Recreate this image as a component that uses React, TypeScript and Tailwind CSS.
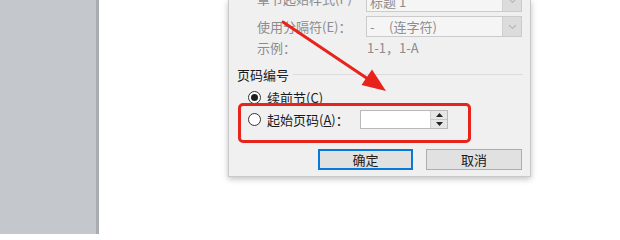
import React from "react";

const FONT = { fontFamily: '"Noto Sans CJK SC", "Noto Sans", sans-serif' };

function Chevron() {
  return (
    <svg width="9" height="6" viewBox="0 0 9 6" fill="none">
      <path d="M1 1l3.5 3.5L8 1" stroke="#b8b8b8" strokeWidth="1.1" />
    </svg>
  );
}

function Combo({ value, h }: { value: string; h: string }) {
  return (
    <div className={`flex w-[156px] ${h} border border-[#cbcbcb] bg-[#f5f5f5]`}>
      <div className="flex-1 flex items-center pl-[3px] text-[13px] text-[#8c8c8c] leading-none whitespace-pre">{value}</div>
      <div className="w-[19px] flex items-center justify-center bg-[#dcdcdc] border-l border-[#cfcfcf]">
        <Chevron />
      </div>
    </div>
  );
}

function Radio({ checked }: { checked?: boolean }) {
  return (
    <span className="w-[13px] h-[13px] rounded-full border border-[#333] bg-white flex items-center justify-center shrink-0">
      {checked && <span className="w-[7px] h-[7px] rounded-full bg-[#1f1f1f]" />}
    </span>
  );
}

function Spinner() {
  return (
    <div className="flex w-[88px] h-[19px] border border-[#b9b9b9] bg-white">
      <div className="flex-1" />
      <div className="w-[17px] flex flex-col border-l border-[#d0d0d0] bg-[#e6e6e6]">
        <div className="flex-1 flex items-center justify-center border-b border-[#c8c8c8]">
          <svg width="7" height="4" viewBox="0 0 7 4"><path d="M0 4h7L3.5 0z" fill="#222" /></svg>
        </div>
        <div className="flex-1 flex items-center justify-center">
          <svg width="7" height="4" viewBox="0 0 7 4"><path d="M0 0h7L3.5 4z" fill="#222" /></svg>
        </div>
      </div>
    </div>
  );
}

export default function App() {
  return (
    <div className="relative w-[620px] h-[234px] overflow-hidden flex bg-white" style={FONT}>
      {/* workspace gutter */}
      <div className="w-[96px] bg-[#c4c7cc]" />
      <div className="w-[3px] bg-[#a9acb1]" />

      {/* page */}
      <div className="flex-1 bg-white">
        <div className="ml-[129px] w-[303px] bg-[#f0f0f0] border border-t-0 border-[#c9c9c9] shadow-[0_2px_6px_rgba(0,0,0,0.25)] flex flex-col pb-[6px]">
          <div className="pl-[28px] flex flex-col">
            <div className="-mt-[10px] h-[22px] flex items-center">
              <span className="w-[109px] text-[13px] text-[#8c8c8c] leading-none relative -top-[3px]">章节起始样式(P)</span>
              <Combo value="标题 1" h="h-[22px]" />
            </div>
            <div className="mt-[4px] h-[21px] flex items-center">
              <span className="w-[109px] text-[13px] text-[#8c8c8c] leading-none">使用分隔符(E)：</span>
              <Combo value="-     (连字符)" h="h-[21px]" />
            </div>
            <div className="h-[20px] flex items-center">
              <span className="w-[110px] text-[13px] text-[#8c8c8c] leading-none">示例：</span>
              <span className="text-[13px] text-[#8c8c8c] leading-none">1-1，1-A</span>
            </div>
          </div>

          <div className="mt-[8px] h-[18px] pl-[8px] pr-[7px] flex items-center">
            <span className="text-[13px] text-[#1a1a1a] leading-none">页码编号</span>
            <div className="flex-1 ml-[4px] h-px bg-[#dcdcdc]" />
          </div>

          <div className="mt-[5px] h-[18px] pl-[19px] flex items-center gap-[6px]">
            <Radio checked />
            <span className="text-[13px] text-[#1a1a1a] leading-none">续前节(C)</span>
          </div>

          <div className="mt-[4px] h-[18px] pl-[19px] flex items-center gap-[6px]">
            <Radio />
            <span className="w-[87px] text-[13px] text-[#1a1a1a] leading-none">
              起始页码(<span className="underline">A</span>)：
            </span>
            <Spinner />
          </div>

          <div className="mt-[21px] pr-[8px] flex justify-end gap-[13px]">
            <button className="w-[95px] h-[21px] bg-[#e1e1e1] border-2 border-[#0a78d7] text-[13px] text-[#1a1a1a] leading-none">
              确定
            </button>
            <button className="w-[96px] h-[21px] bg-[#e1e1e1] border border-[#adadad] text-[13px] text-[#1a1a1a] leading-none">
              取消
            </button>
          </div>
        </div>
      </div>

      {/* annotation: red box + arrow */}
      <div className="absolute left-[238px] top-[103px] w-[233px] h-[40px] border-[3px] border-[#e8231b] rounded-[5px] pointer-events-none" />
      <svg className="absolute inset-0 pointer-events-none" width="620" height="234" viewBox="0 0 620 234">
        <path d="M283 22L368 79" stroke="#e8231b" strokeWidth="3" strokeLinecap="round" />
        <path d="M386 91L361.5 85L372 69.5z" fill="#e8231b" />
      </svg>
    </div>
  );
}
